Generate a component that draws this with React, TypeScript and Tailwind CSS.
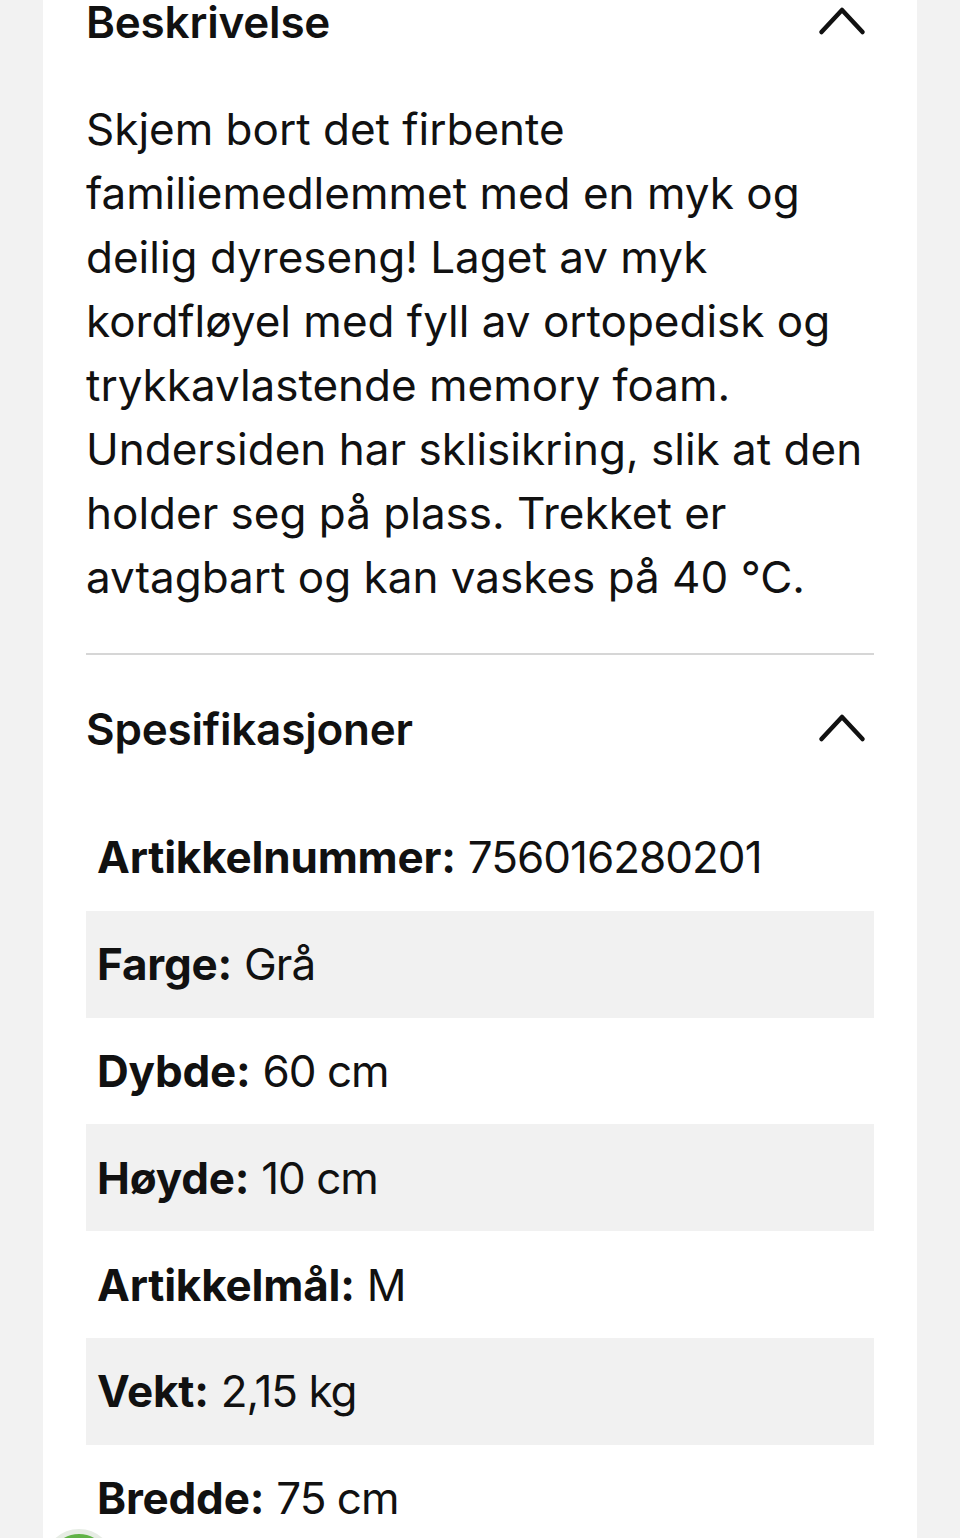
import React from 'react';

const specs = [
  { label: 'Artikkelnummer:', value: '756016280201' },
  { label: 'Farge:', value: 'Grå' },
  { label: 'Dybde:', value: '60 cm' },
  { label: 'Høyde:', value: '10 cm' },
  { label: 'Artikkelmål:', value: 'M' },
  { label: 'Vekt:', value: '2,15 kg' },
  { label: 'Bredde:', value: '75 cm' },
];

const Chevron = () => (
  <svg width="56" height="34" viewBox="0 0 56 34" fill="none" className="shrink-0">
    <polyline
      points="3.5,27 24,5 44.5,27"
      stroke="#111"
      strokeWidth="4.5"
      strokeLinecap="round"
      strokeLinejoin="round"
    />
  </svg>
);

const SectionHeader = ({ title }: { title: string }) => (
  <div className="flex h-[44px] items-center justify-between">
    <h2 className="text-[44px] font-semibold leading-none tracking-[-0.2px]">{title}</h2>
    <Chevron />
  </div>
);

export default function App() {
  return (
    <div
      className="relative h-[1538px] overflow-hidden bg-[#f2f2f2] text-[#111]"
      style={{ fontFamily: 'Inter, "Noto Sans", sans-serif' }}
    >
      <div className="mx-[43px] flex h-full flex-col bg-white px-[43px]">
        {/* Beskrivelse */}
        <SectionHeader title="Beskrivelse" />
        <p className="mt-[53px] text-[44px] leading-[64px] font-normal">
          Skjem bort det firbente familiemedlemmet med en myk og deilig dyreseng! Laget av myk
          kordfløyel med fyll av ortopedisk og trykkavlastende memory foam. Undersiden har
          sklisikring, slik at den holder seg på plass. Trekket er avtagbart og kan vaskes på 40 °C.
        </p>

        <div className="mt-[44px] h-[2px] shrink-0 bg-[#d6d6d6]" />

        {/* Spesifikasjoner */}
        <div className="mt-[52px]">
          <SectionHeader title="Spesifikasjoner" />
        </div>
        <div className="mt-[53px] flex flex-col">
          {specs.map((s, i) => (
            <div
              key={s.label}
              className={`flex h-[106.8px] shrink-0 items-center px-[11px] text-[44px] ${
                i % 2 === 1 ? 'bg-[#f1f1f1]' : 'bg-white'
              }`}
            >
              <span className="font-bold tracking-[-0.2px]">{s.label}</span>
              <span className="ml-[12px] font-normal tracking-[-1px]">{s.value}</span>
            </div>
          ))}
        </div>
      </div>

      {/* floating button peeking in at bottom left */}
      <div className="absolute left-[44px] top-[1529px] h-[70px] w-[70px] rounded-full border-[5px] border-[#e6ece4] bg-[#5fb246]" />
    </div>
  );
}
